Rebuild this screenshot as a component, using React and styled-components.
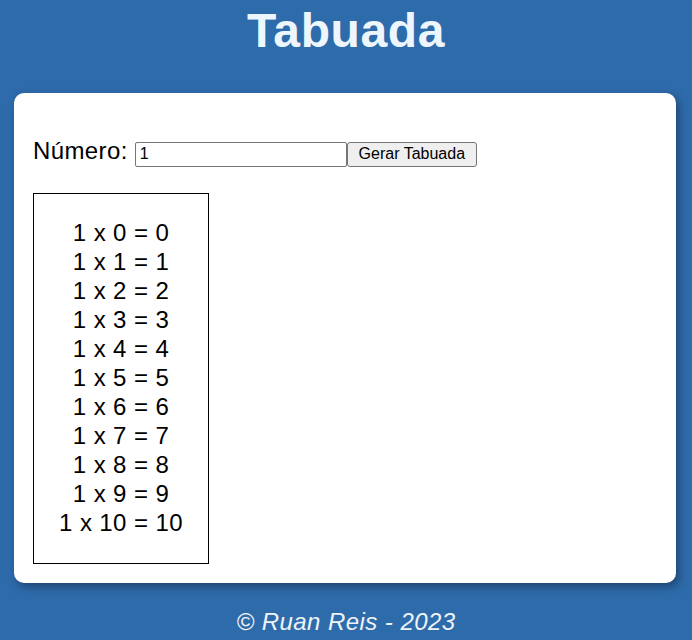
import React from "react";
import styled, { createGlobalStyle } from "styled-components";

const GlobalStyle = createGlobalStyle`
  html, body {
    margin: 0;
    padding: 0;
    background: #2e6bab;
  }
  body {
    font-family: "Liberation Sans", Arial, sans-serif;
  }
`;

const Page = styled.div`
  display: flex;
  flex-direction: column;
  min-height: 640px;
`;

const Title = styled.h1`
  margin: 0;
  padding-top: 3px;
  text-align: center;
  font-size: 48px;
  font-weight: bold;
  line-height: 55px;
  letter-spacing: 0.6px;
  color: #eef6fd;
`;

const Card = styled.main`
  margin: 35px 16px 0 14px;
  padding: 44px 19px 19px;
  background: #ffffff;
  border-radius: 10px;
  box-shadow: 3px 4px 8px rgba(20, 40, 70, 0.55);
`;

const FormRow = styled.div`
  display: flex;
  align-items: baseline;
`;

const Label = styled.label`
  font-size: 24px;
  letter-spacing: 0.4px;
  color: #000;
  margin-right: 7px;
`;

const NumberInput = styled.input`
  box-sizing: border-box;
  width: 212px;
  height: 25px;
  padding: 0 4px;
  border: 1px solid #767676;
  border-radius: 2px;
  font-family: "Liberation Sans", Arial, sans-serif;
  font-size: 16px;
  color: #000;
  background: #fff;
`;

const Button = styled.button`
  box-sizing: border-box;
  width: 130px;
  height: 25px;
  padding: 0;
  border: 1px solid #767676;
  border-radius: 3px;
  background: #efefef;
  font-family: "Liberation Sans", Arial, sans-serif;
  font-size: 16px;
  color: #000;
`;

const TableBox = styled.div`
  box-sizing: border-box;
  width: 176px;
  margin-top: 26px;
  padding: 24px 0 26px;
  border: 1px solid #000;
  text-align: center;
  font-size: 24px;
  line-height: 29px;
  letter-spacing: 0.4px;
  color: #000;
`;

const Line = styled.div``;

const Footer = styled.footer`
  margin-top: 25px;
  text-align: center;
  font-size: 24px;
  font-style: italic;
  line-height: 28px;
  letter-spacing: 0.45px;
  color: #eef3f8;
`;

export default function App() {
  const n = 1;
  const rows = Array.from({ length: 11 }, (_, i) => `${n} x ${i} = ${n * i}`);
  return (
    <Page>
      <GlobalStyle />
      <Title>Tabuada</Title>
      <Card>
        <FormRow>
          <Label htmlFor="num">Número:</Label>
          <NumberInput id="num" type="text" defaultValue="1" />
          <Button type="button">Gerar Tabuada</Button>
        </FormRow>
        <TableBox>
          {rows.map((r) => (
            <Line key={r}>{r}</Line>
          ))}
        </TableBox>
      </Card>
      <Footer>© Ruan Reis - 2023</Footer>
    </Page>
  );
}
